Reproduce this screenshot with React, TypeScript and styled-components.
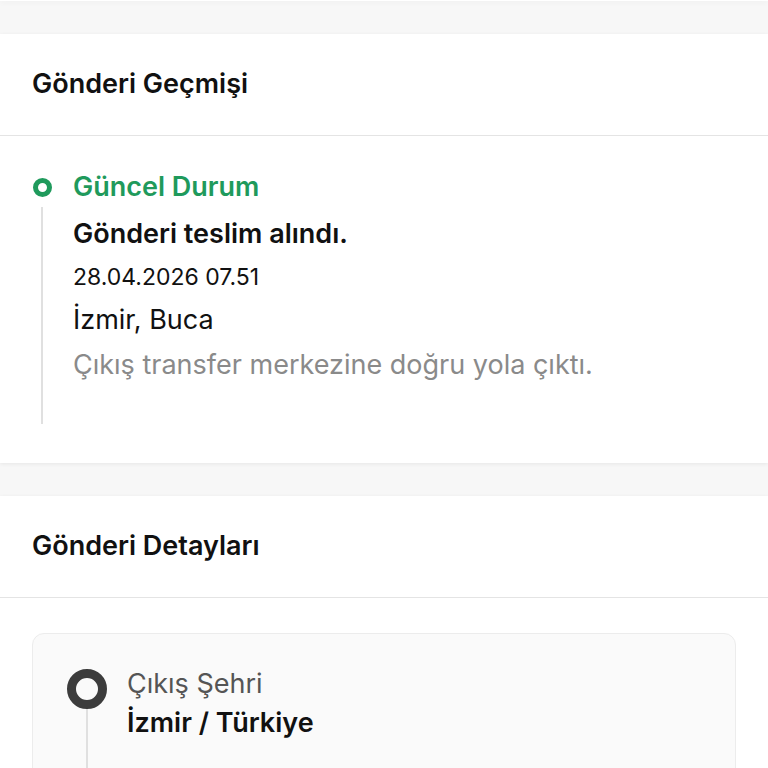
import React from 'react';
import styled, { createGlobalStyle } from 'styled-components';

const GlobalStyle = createGlobalStyle`
  html, body {
    margin: 0;
    padding: 0;
    background: #f7f7f7;
    font-family: Inter, "Noto Sans", "Liberation Sans", sans-serif;
    color: #111;
  }
`

const Page = styled.div`
  display: flex;
  flex-direction: column;
  gap: 33px;
  padding-bottom: 40px;
`

const TopStub = styled.div`
  height: 1px;
  background: #fff;
  box-shadow: 0 1px 5px rgba(0, 0, 0, 0.1);
`

const Card = styled.section`
  background: #fff;
  box-shadow: 0 1px 4px rgba(0, 0, 0, 0.07);
`

const CardHeader = styled.h2`
  margin: 0;
  padding: 0 32px 2px;
  height: 99px;
  display: flex;
  align-items: center;
  font-size: 27px;
  font-weight: 600;
  color: #111;
  border-bottom: 1px solid #e4e4e4;
`

const CardBody = styled.div`
  padding: 35px 32px 39px;
`

const TimelineItem = styled.div`
  display: grid;
  grid-template-columns: 20px 1fr;
  column-gap: 21px;
`

const Marker = styled.div`
  display: flex;
  flex-direction: column;
  align-items: center;
  padding-top: 7px;
`

const Dot = styled.span<{ $color: string; $size: number; $ring: number }>`
  box-sizing: border-box;
  width: ${p => p.$size}px;
  height: ${p => p.$size}px;
  border-radius: 50%;
  border: ${p => p.$ring}px solid ${p => p.$color};
  background: transparent;
  flex-shrink: 0;
`

const Rail = styled.span<{ $gap: number }>`
  flex: 1;
  width: 2px;
  margin-top: ${p => p.$gap}px;
  background: #e0e0e0;
`

const Content = styled.div`
  display: flex;
  flex-direction: column;
  padding-bottom: 42px;
`

const StatusTitle = styled.div`
  font-size: 27px;
  font-weight: 600;
  line-height: 32px;
  color: #1f9a5c;
  margin-bottom: 14px;
`

const Line = styled.div<{ $tone?: 'strong' | 'normal' | 'muted'; $size?: number }>`
  font-size: ${p => p.$size ?? 27}px;
  line-height: ${p => (p.$size ? 30 : 34)}px;
  font-weight: ${p => (p.$tone === 'strong' ? 600 : 400)};
  color: ${p => (p.$tone === 'muted' ? '#8a8a8a' : '#111')};
  & + & {
    margin-top: 11px;
  }
`

const InnerCard = styled.div`
  background: #fafafa;
  border: 1px solid #ececec;
  border-radius: 12px;
  padding: 33px 34px 0;
  min-height: 160px;
`

const RouteItem = styled.div`
  display: grid;
  grid-template-columns: 40px 1fr;
  column-gap: 20px;
`

const RouteMarker = styled.div`
  display: flex;
  flex-direction: column;
  align-items: center;
  padding-top: 2px;
  height: 140px;
`

const RouteLabel = styled.div`
  font-size: 27px;
  line-height: 34px;
  color: #555;
`

const RouteValue = styled.div`
  font-size: 27px;
  line-height: 34px;
  font-weight: 600;
  color: #111;
  margin-top: 5px;
`

export default function App() {
  return (
    <>
      <GlobalStyle />
      <Page>
        <TopStub />
        <Card>
          <CardHeader>Gönderi Geçmişi</CardHeader>
          <CardBody>
            <TimelineItem>
              <Marker>
                <Dot $color="#1f9a5c" $size={19} $ring={5} />
                <Rail $gap={10} />
              </Marker>
              <Content>
                <StatusTitle>Güncel Durum</StatusTitle>
                <Line $tone="strong">Gönderi teslim alındı.</Line>
                <Line $size={23}>28.04.2026 07.51</Line>
                <Line>İzmir, Buca</Line>
                <Line $tone="muted">Çıkış transfer merkezine doğru yola çıktı.</Line>
              </Content>
            </TimelineItem>
          </CardBody>
        </Card>
        <Card>
          <CardHeader>Gönderi Detayları</CardHeader>
          <CardBody>
            <InnerCard>
              <RouteItem>
                <RouteMarker>
                  <Dot $color="#3c3c3c" $size={40} $ring={9} />
                  <Rail $gap={0} />
                </RouteMarker>
                <div>
                  <RouteLabel>Çıkış Şehri</RouteLabel>
                  <RouteValue>İzmir / Türkiye</RouteValue>
                </div>
              </RouteItem>
            </InnerCard>
          </CardBody>
        </Card>
      </Page>
    </>
  )
}
